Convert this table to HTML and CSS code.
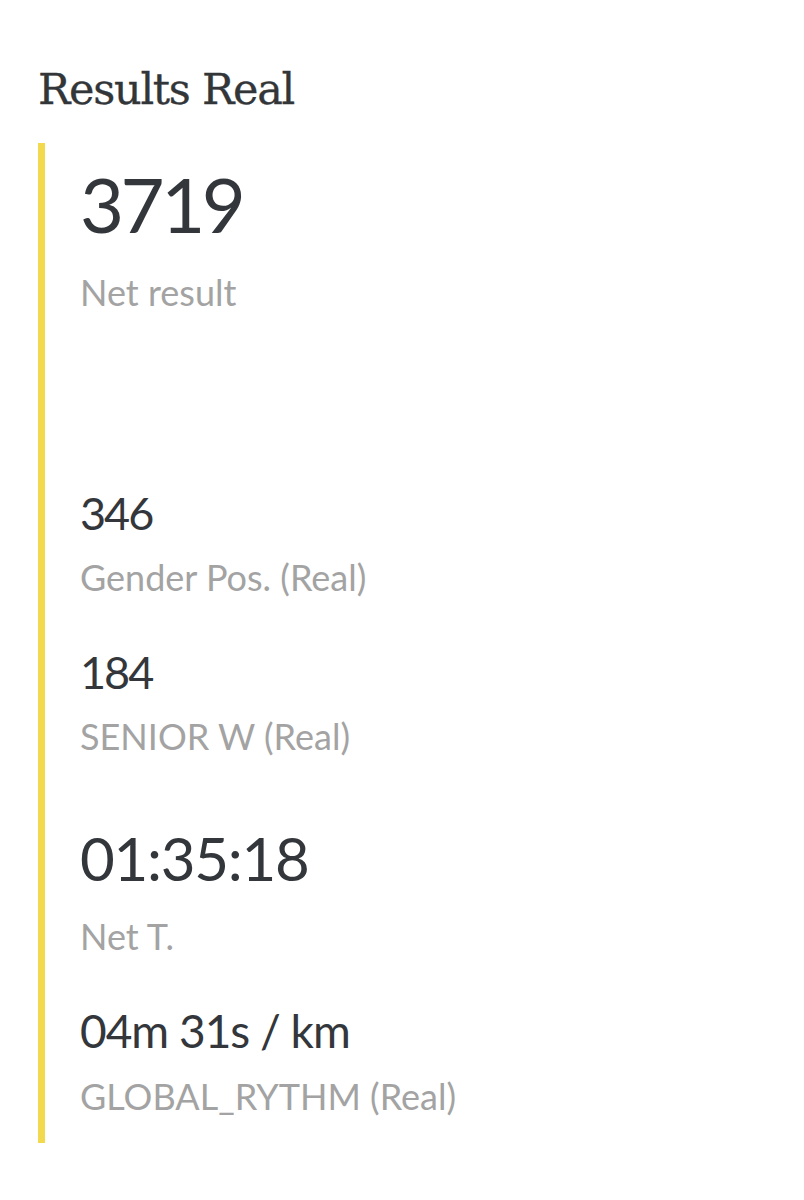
FILE: index.html
```html
<!DOCTYPE html>
<html lang="en">
<head>
<meta charset="utf-8">
<title>Results Real</title>
<link rel="stylesheet" href="styles.css">
</head>
<body>
<main class="page">
  <h1 class="title">Results Real</h1>
  <section class="results">
    <div class="stat stat--hero">
      <div class="stat__value">3719</div>
      <div class="stat__label">Net result</div>
    </div>
    <div class="stat stat--small stat--after-hero">
      <div class="stat__value">346</div>
      <div class="stat__label">Gender Pos. (Real)</div>
    </div>
    <div class="stat stat--small">
      <div class="stat__value">184</div>
      <div class="stat__label">SENIOR W (Real)</div>
    </div>
    <div class="stat stat--time">
      <div class="stat__value">01:35:18</div>
      <div class="stat__label">Net T.</div>
    </div>
    <div class="stat stat--pace">
      <div class="stat__value">04m 31s / km</div>
      <div class="stat__label">GLOBAL_RYTHM (Real)</div>
    </div>
  </section>
</main>
</body>
</html>
```

FILE: styles.css
```css
html, body {
  margin: 0;
  padding: 0;
  background: #ffffff;
}

.page {
  padding: 64px 0 0 38px;
}

.title {
  margin: 0;
  font-family: "DejaVu Serif", "Liberation Serif", serif;
  font-weight: normal;
  font-size: 43px;
  letter-spacing: -1.3px;
  line-height: 1.2;
  color: #333639;
  -webkit-text-stroke: 0.3px #333639;
}

.results {
  margin-top: 27px;
  border-left: 7px solid #f2d94e;
  padding: 15px 0 25px 35px;
  width: 400px;
}

.stat__value,
.stat__label {
  font-family: Lato, "Noto Sans", sans-serif;
  line-height: 1.2;
}

.stat__value {
  color: #33373b;
}

.stat__label {
  color: #a3a3a3;
  font-size: 36px;
}

.stat--hero .stat__value {
  font-size: 76px;
  letter-spacing: -3.5px;
}

.stat--hero .stat__label {
  margin-top: 22px;
}

.stat--small .stat__value {
  font-size: 45px;
  letter-spacing: -2px;
}

.stat--small .stat__label {
  margin-top: 16px;
}

.stat--small {
  margin-top: 46px;
}

.stat--after-hero {
  margin-top: 172px;
}

.stat--time {
  margin-top: 64px;
}

.stat--time .stat__value {
  font-size: 60px;
  letter-spacing: -1.3px;
}

.stat--time .stat__label {
  margin-top: 21px;
}

.stat--pace {
  margin-top: 44px;
}

.stat--pace .stat__value {
  font-size: 46px;
  letter-spacing: -1px;
}

.stat--pace .stat__label {
  margin-top: 17px;
}
```
